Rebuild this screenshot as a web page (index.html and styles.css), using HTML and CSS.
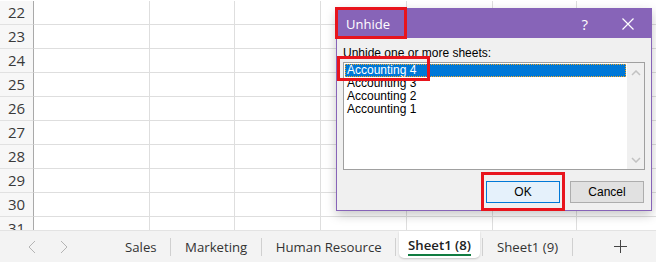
FILE: index.html
```html
<!DOCTYPE html>
<html lang="en">
<head>
    <meta charset="UTF-8">
    <title>Unhide sheets</title>
    <link rel="stylesheet" href="styles.css">
</head>
<body>
    <div class="workbook">
        <div class="grid">
            <div class="row"><div class="rowhead">22</div><div class="cell c1"></div><div class="cell c2"></div><div class="cell c3"></div><div class="cell c3"></div><div class="cell c3"></div><div class="cell c4"></div><div class="cell c5"></div></div>
            <div class="row"><div class="rowhead">23</div><div class="cell c1"></div><div class="cell c2"></div><div class="cell c3"></div><div class="cell c3"></div><div class="cell c3"></div><div class="cell c4"></div><div class="cell c5"></div></div>
            <div class="row"><div class="rowhead">24</div><div class="cell c1"></div><div class="cell c2"></div><div class="cell c3"></div><div class="cell c3"></div><div class="cell c3"></div><div class="cell c4"></div><div class="cell c5"></div></div>
            <div class="row"><div class="rowhead">25</div><div class="cell c1"></div><div class="cell c2"></div><div class="cell c3"></div><div class="cell c3"></div><div class="cell c3"></div><div class="cell c4"></div><div class="cell c5"></div></div>
            <div class="row"><div class="rowhead">26</div><div class="cell c1"></div><div class="cell c2"></div><div class="cell c3"></div><div class="cell c3"></div><div class="cell c3"></div><div class="cell c4"></div><div class="cell c5"></div></div>
            <div class="row"><div class="rowhead">27</div><div class="cell c1"></div><div class="cell c2"></div><div class="cell c3"></div><div class="cell c3"></div><div class="cell c3"></div><div class="cell c4"></div><div class="cell c5"></div></div>
            <div class="row"><div class="rowhead">28</div><div class="cell c1"></div><div class="cell c2"></div><div class="cell c3"></div><div class="cell c3"></div><div class="cell c3"></div><div class="cell c4"></div><div class="cell c5"></div></div>
            <div class="row"><div class="rowhead">29</div><div class="cell c1"></div><div class="cell c2"></div><div class="cell c3"></div><div class="cell c3"></div><div class="cell c3"></div><div class="cell c4"></div><div class="cell c5"></div></div>
            <div class="row"><div class="rowhead">30</div><div class="cell c1"></div><div class="cell c2"></div><div class="cell c3"></div><div class="cell c3"></div><div class="cell c3"></div><div class="cell c4"></div><div class="cell c5"></div></div>
            <div class="row"><div class="rowhead">31</div><div class="cell c1"></div><div class="cell c2"></div><div class="cell c3"></div><div class="cell c3"></div><div class="cell c3"></div><div class="cell c4"></div><div class="cell c5"></div></div>
        </div>

        <div class="tabbar">
            <div class="nav">
                <svg width="8" height="14" viewBox="0 0 8 14"><path d="M7 1 L1 7 L7 13" stroke="#b4b4b4" stroke-width="1" fill="none"/></svg>
                <svg width="8" height="14" viewBox="0 0 8 14"><path d="M1 1 L7 7 L1 13" stroke="#b4b4b4" stroke-width="1" fill="none"/></svg>
            </div>
            <div class="tab">Sales</div>
            <div class="sep"></div>
            <div class="tab">Marketing</div>
            <div class="sep"></div>
            <div class="tab">Human Resource</div>
            <div class="sep"></div>
            <div class="tab active"><span>Sheet1 (8)</span></div>
            <div class="sep"></div>
            <div class="tab">Sheet1 (9)</div>
            <div class="sep"></div>
            <svg class="add" width="13" height="13" viewBox="0 0 13 13"><path d="M6.5 0 V13 M0 6.5 H13" stroke="#444" stroke-width="1" fill="none"/></svg>
        </div>

        <!-- the Unhide dialog floats over the sheet -->
        <div class="dialog">
            <div class="titlebar">
                <span class="title">Unhide</span>
                <span class="help">?</span>
                <svg class="close" width="12" height="12" viewBox="0 0 12 12">
                    <path d="M0.5 0.5 L11.5 11.5 M11.5 0.5 L0.5 11.5" stroke="#fff" stroke-width="1.2" fill="none"/>
                </svg>
            </div>
            <div class="body">
                <div class="label">Unhide one or more sheets:</div>
                <div class="listbox">
                    <div class="items">
                        <div class="item selected">Accounting 4</div>
                        <div class="item">Accounting 3</div>
                        <div class="item">Accounting 2</div>
                        <div class="item">Accounting 1</div>
                    </div>
                    <div class="scrollbar">
                        <svg width="10" height="6" viewBox="0 0 10 6"><path d="M1 5 L5 1 L9 5" stroke="#c2c2c2" stroke-width="1.5" fill="none"/></svg>
                        <svg width="10" height="6" viewBox="0 0 10 6"><path d="M1 1 L5 5 L9 1" stroke="#c2c2c2" stroke-width="1.5" fill="none"/></svg>
                    </div>
                </div>
                <div class="buttons">
                    <button class="btn default">OK</button>
                    <button class="btn">Cancel</button>
                </div>
            </div>
        </div>

        <div class="mark mark-title"></div>
        <div class="mark mark-item"></div>
        <div class="mark mark-ok"></div>
    </div>
</body>
</html>
```

FILE: styles.css
```css
body {
    margin: 0;
    padding: 0;
    background: #fff;
}

.workbook {
    position: relative;
    width: 656px;
    height: 262px;
    overflow: hidden;
    font-family: "Open Sans", "Noto Sans", sans-serif;
}

.grid {
    height: 229px;
    padding-top: 1px;
    overflow: hidden;
}

.row {
    display: flex;
    height: 24px;
}

.rowhead {
    width: 33px;
    flex: none;
    border-right: 1px solid #a9a9a9;
    border-bottom: 1px solid #e1e1e1;
    background: #f7f7f7;
    color: #3a3a3a;
    font-size: 15px;
    line-height: 23px;
    text-align: center;
    height: 23px;
}

.cell {
    flex: none;
    height: 23px;
    border-right: 1px solid #dedede;
    border-bottom: 1px solid #dedede;
}

.c1 { width: 115px; }
.c2 { width: 84px; }
.c3 { width: 85px; }
.c4 { width: 83px; }
.c5 { width: 85px; }

.tabbar {
    height: 32px;
    background: #f3f3f3;
    border-top: 1px solid #e3e3e3;
    display: flex;
    align-items: center;
    color: #333;
    font-size: 13.2px;
    box-sizing: border-box;
}

.nav {
    width: 111px;
    display: flex;
    gap: 24px;
    padding-left: 28px;
    box-sizing: border-box;
}

.tab {
    padding: 0 13.5px 0 14px;
    white-space: nowrap;
}

.sep {
    width: 1px;
    height: 18px;
    background: #d0d0d0;
}

.tab.active {
    align-self: flex-start;
    background: #fff;
    height: 27px;
    margin: 0 2px 0 3px;
    padding: 0 9px;
    border-radius: 0 0 5px 5px;
    box-shadow: 0 1px 2px rgba(0, 0, 0, 0.18);
    font-weight: 600;
    color: #222;
    display: flex;
    align-items: center;
}

.tab.active span {
    border-bottom: 2px solid #107c41;
    padding-top: 2px;
    line-height: 18px;
}

.add {
    margin-left: 41px;
}

.dialog {
    position: absolute;
    left: 336px;
    top: 8px;
    width: 316px;
    height: 203px;
    box-sizing: border-box;
    border: 1px solid #8764b8;
    background: #f0f0f0;
    box-shadow: 0 4px 10px rgba(0, 0, 0, 0.22);
    display: flex;
    flex-direction: column;
}

.titlebar {
    height: 29px;
    background: #8764b8;
    color: #fff;
    display: flex;
    align-items: center;
    padding: 0 17px 0 9px;
    font-size: 13px;
}

.title {
    flex: 1;
}

.help {
    margin-right: 34px;
    font-size: 15px;
}

.body {
    padding: 8px 6px 0 6px;
    font-family: "Liberation Sans", Arial, sans-serif;
    font-size: 12px;
    color: #000;
}

.label {
    height: 15px;
    line-height: 15px;
}

.listbox {
    margin-top: 1px;
    height: 108px;
    border: 1px solid #a0a0a0;
    background: #fff;
    display: flex;
    box-sizing: border-box;
}

.items {
    flex: 1;
    padding: 1px 1px 0 1px;
}

.item {
    height: 13px;
    line-height: 13px;
    padding-left: 2px;
}

.item.selected {
    background: #0078d7;
    color: #fff;
    outline: 1px dotted #f5a623;
    outline-offset: -1px;
}

.scrollbar {
    width: 17px;
    background: #f0f0f0;
    display: flex;
    flex-direction: column;
    justify-content: space-between;
    align-items: center;
    padding: 7px 0 6px;
    box-sizing: border-box;
}

.buttons {
    display: flex;
    justify-content: flex-end;
    gap: 10px;
    margin-top: 11px;
    padding-right: 1px;
}

.btn {
    width: 74px;
    height: 22px;
    border: 1px solid #adadad;
    background: #e1e1e1;
    font-family: "Liberation Sans", Arial, sans-serif;
    font-size: 12px;
    color: #000;
    padding: 0;
}

.btn.default {
    border-color: #0078d7;
    background: #e5f1fb;
}

.mark {
    position: absolute;
    border: 3px solid #e8141c;
    box-sizing: border-box;
}

.mark-title {
    left: 335px;
    top: 7px;
    width: 72px;
    height: 32px;
}

.mark-item {
    left: 337px;
    top: 56px;
    width: 93px;
    height: 25px;
}

.mark-ok {
    left: 481px;
    top: 172px;
    width: 84px;
    height: 39px;
}
```
